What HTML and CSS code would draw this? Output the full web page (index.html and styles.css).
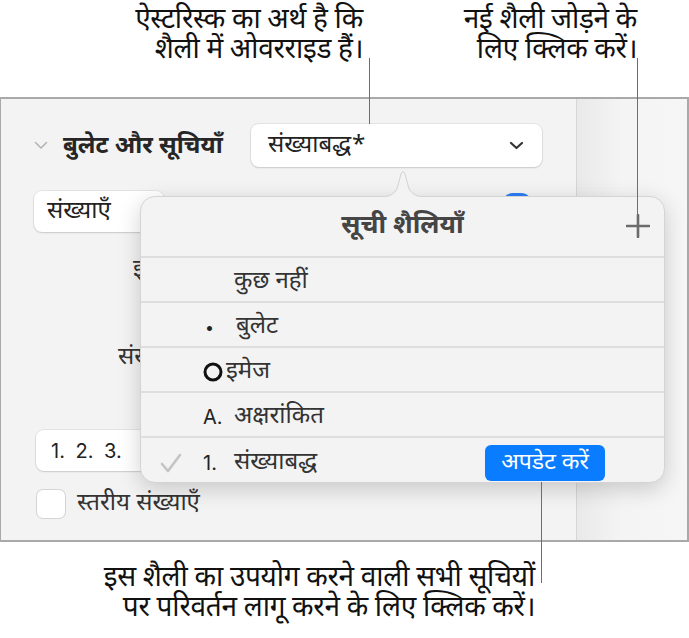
FILE: index.html
```html
<!DOCTYPE html>
<html lang="hi">
<head>
    <meta charset="UTF-8">
    <meta name="viewport" content="width=device-width, initial-scale=1.0">
    <title>सूची शैलियाँ</title>
    <link rel="stylesheet" href="styles.css">
</head>
<body>

<div class="page">
    <!-- ऊपर के संकेत -->
    <div class="callouts-top">
        <p class="callout callout-asterisk">ऐस्टरिस्क का अर्थ है कि<br>शैली में ओवरराइड हैं।</p>
        <p class="callout callout-add">नई शैली जोड़ने के<br>लिए क्लिक करें।</p>
    </div>

    <div class="panel">
        <div class="sidebar">
            <div class="section-head">
                <svg class="disclosure" width="14" height="9" viewBox="0 0 14 9"><path d="M1.5 1.5 L7 7 L12.5 1.5" fill="none" stroke="#b5b5b5" stroke-width="1.6" stroke-linecap="round" stroke-linejoin="round"/></svg>
                <span class="section-title">बुलेट और सूचियाँ</span>
                <div class="select select-style">
                    <span>संख्याबद्ध*</span>
                    <svg width="15" height="9" viewBox="0 0 15 9"><path d="M2 2 L7.5 7 L13 2" fill="none" stroke="#333" stroke-width="2.2" stroke-linecap="round" stroke-linejoin="round"/></svg>
                </div>
            </div>

            <div class="row-kind">
                <div class="select select-kind">संख्याएँ</div>
                <div class="switch"></div>
            </div>

            <div class="label-row label-indent">इंडेंट</div>
            <div class="label-row label-number">संख्या</div>

            <div class="select select-format">1. 2. 3.</div>

            <label class="check-row">
                <span class="checkbox"></span>
                <span>स्तरीय संख्याएँ</span>
            </label>
        </div>
        <div class="strip"></div>

        <!-- सूची शैलियाँ पॉपओवर -->
        <div class="popover">
            <svg class="caret" width="48" height="28" viewBox="0 0 48 28"><path d="M0 27 C10 27 14 25 18 19 L22 4 C23 1 25 1 26 4 L30 19 C34 25 38 27 48 27" fill="#f3f3f4" stroke="#d2d2d2" stroke-width="1"/><rect x="0" y="27" width="48" height="2" fill="#f3f3f4"/></svg>
            <div class="popover-head">
                <span class="popover-title">सूची शैलियाँ</span>
                <svg class="plus" width="24" height="24" viewBox="0 0 24 24"><path d="M12 1 V23 M1 12 H23" stroke="#6b6b6b" stroke-width="2.6" stroke-linecap="round"/></svg>
            </div>
            <ul class="style-list">
                <li><span class="check"></span><span class="marker"></span><span>कुछ नहीं</span></li>
                <li><span class="check"></span><span class="marker marker-dot">•</span><span>बुलेट</span></li>
                <li><span class="check"></span><span class="marker marker-ring"><svg width="20" height="20" viewBox="0 0 20 20"><circle cx="10" cy="10" r="8" fill="none" stroke="#111" stroke-width="3"/></svg></span><span>इमेज</span></li>
                <li><span class="check"></span><span class="marker">A.</span><span>अक्षरांकित</span></li>
                <li class="active">
                    <span class="check"><svg width="22" height="20" viewBox="0 0 22 20"><path d="M2 11 L8 18 L20 2" fill="none" stroke="#c4c4c4" stroke-width="2.6" stroke-linecap="round" stroke-linejoin="round"/></svg></span>
                    <span class="marker">1.</span><span>संख्याबद्ध</span>
                    <span class="update-btn">अपडेट करें</span>
                </li>
            </ul>
        </div>
    </div>

    <p class="callout callout-update">इस शैली का उपयोग करने वाली सभी सूचियों<br>पर परिवर्तन लागू करने के लिए क्लिक करें।</p>

    <!-- संकेत रेखाएँ -->
    <span class="leader leader-asterisk"></span>
    <span class="leader leader-add"></span>
    <span class="leader leader-update"></span>
</div>

</body>
</html>
```

FILE: styles.css
```css
/* पेज */
body {
    margin: 0;
    background: #fff;
    font-family: "Noto Sans Devanagari", "Lohit Devanagari", "Noto Sans", sans-serif;
    color: #222;
}
.page {
    position: relative;
    width: 689px;
    height: 638px;
}

/* संकेत */
.callout {
    margin: 0;
    font-size: 28px;
    line-height: 30px;
    color: #111;
    text-align: right;
    letter-spacing: -0.3px;
}
.callouts-top {
    display: flex;
    height: 97px;
    padding-top: 6px;
    box-sizing: border-box;
}
.callout-asterisk {
    width: 363px;
}
.callout-add {
    width: 274px;
}
.callout-update {
    width: 535px;
    padding-top: 22px;
}
.leader {
    position: absolute;
    width: 1px;
    background: #6e6e6e;
}
.leader-asterisk {
    left: 369px;
    top: 58px;
    height: 66px;
}
.leader-add {
    left: 637px;
    top: 58px;
    height: 158px;
}
.leader-update {
    left: 541px;
    top: 482px;
    height: 101px;
}

/* पैनल */
.panel {
    position: relative;
    display: flex;
    height: 445px;
    border: 2px solid #a9a9a9;
    border-left-width: 1px;
    box-sizing: border-box;
    background: #f3f3f3;
}
.sidebar {
    width: 576px;
    border-right: 1px solid #d6d6d6;
    padding-left: 33px;
    box-sizing: border-box;
}
.strip {
    flex: 1;
    background: linear-gradient(to right, #e9e9e9, #f4f4f4 40%, #f6f6f6);
}
.section-head {
    display: flex;
    align-items: center;
    width: 508px;
    height: 43px;
    margin-top: 25px;
}
.disclosure {
    margin-right: 15px;
}
.section-title {
    font-size: 24px;
    font-weight: bold;
    color: #262626;
    padding-top: 2px;
}
.select {
    display: flex;
    align-items: center;
    background: #fff;
    border-radius: 8px;
    box-shadow: 0 0 0 1px rgba(0, 0, 0, 0.06), 0 1px 2px rgba(0, 0, 0, 0.12);
    font-size: 24px;
    color: #222;
    box-sizing: border-box;
}
.select-style {
    justify-content: space-between;
    width: 291px;
    height: 43px;
    margin-left: auto;
    padding: 0 18px 0 17px;
}
.row-kind {
    display: flex;
    align-items: flex-start;
    margin-top: 24px;
    height: 41px;
}
.select-kind {
    width: 130px;
    height: 41px;
    padding-left: 13px;
}
.switch {
    width: 30px;
    height: 22px;
    margin-left: 338px;
    margin-top: 2px;
    border-radius: 11px;
    background: #2a7cf6;
}
.label-row {
    height: 30px;
    line-height: 30px;
    font-size: 24px;
    color: #333;
}
.label-indent {
    margin-top: 23px;
    padding-left: 99px;
}
.label-number {
    margin-top: 58px;
    padding-left: 84px;
}
.select-format {
    width: 140px;
    height: 41px;
    margin-top: 57px;
    margin-left: 2px;
    padding-left: 15px;
    font-family: "Inter", "Liberation Sans", sans-serif;
    font-size: 20px;
    word-spacing: 5px;
}
.check-row {
    display: flex;
    align-items: center;
    gap: 12px;
    height: 29px;
    margin-top: 18px;
    margin-left: 3px;
    font-size: 24px;
    color: #333;
}
.checkbox {
    width: 28px;
    height: 28px;
    border-radius: 6px;
    background: #fff;
    box-shadow: 0 0 0 1px #d5d5d5;
}

/* पॉपओवर */
.popover {
    position: absolute;
    left: 139px;
    top: 97px;
    width: 525px;
    height: 287px;
    background: #f3f3f4;
    border: 1px solid #d4d4d4;
    border-radius: 15px;
    box-shadow: 0 6px 22px rgba(0, 0, 0, 0.18);
    box-sizing: border-box;
}
.caret {
    position: absolute;
    left: 238px;
    top: -27px;
}
.popover-head {
    display: flex;
    align-items: center;
    justify-content: center;
    position: relative;
    height: 59px;
    border-bottom: 2px solid #dedede;
}
.popover-title {
    font-size: 26px;
    font-weight: bold;
    color: #454545;
}
.plus {
    position: absolute;
    right: 14px;
    top: 17px;
}
.style-list {
    list-style: none;
    margin: 0;
    padding: 0;
}
.style-list li {
    display: flex;
    align-items: center;
    height: 45px;
    padding-top: 4px;
    border-bottom: 2px solid #dedede;
    box-sizing: border-box;
    font-size: 24px;
    color: #333;
}
.style-list li:last-child {
    border-bottom: none;
}
.check {
    display: flex;
    width: 62px;
    padding-left: 19px;
    box-sizing: border-box;
}
.marker {
    width: 31px;
    font-family: "Inter", "Liberation Sans", sans-serif;
    font-size: 20px;
    color: #222;
}
.marker-dot {
    padding-left: 2px;
    font-size: 16px;
}
.marker-ring {
    display: flex;
    width: 23px;
}
.update-btn {
    margin-left: auto;
    margin-right: 59px;
    width: 120px;
    height: 36px;
    line-height: 36px;
    text-align: center;
    border-radius: 6px;
    background: #0a7cff;
    color: #fff;
    font-size: 23px;
}
```
